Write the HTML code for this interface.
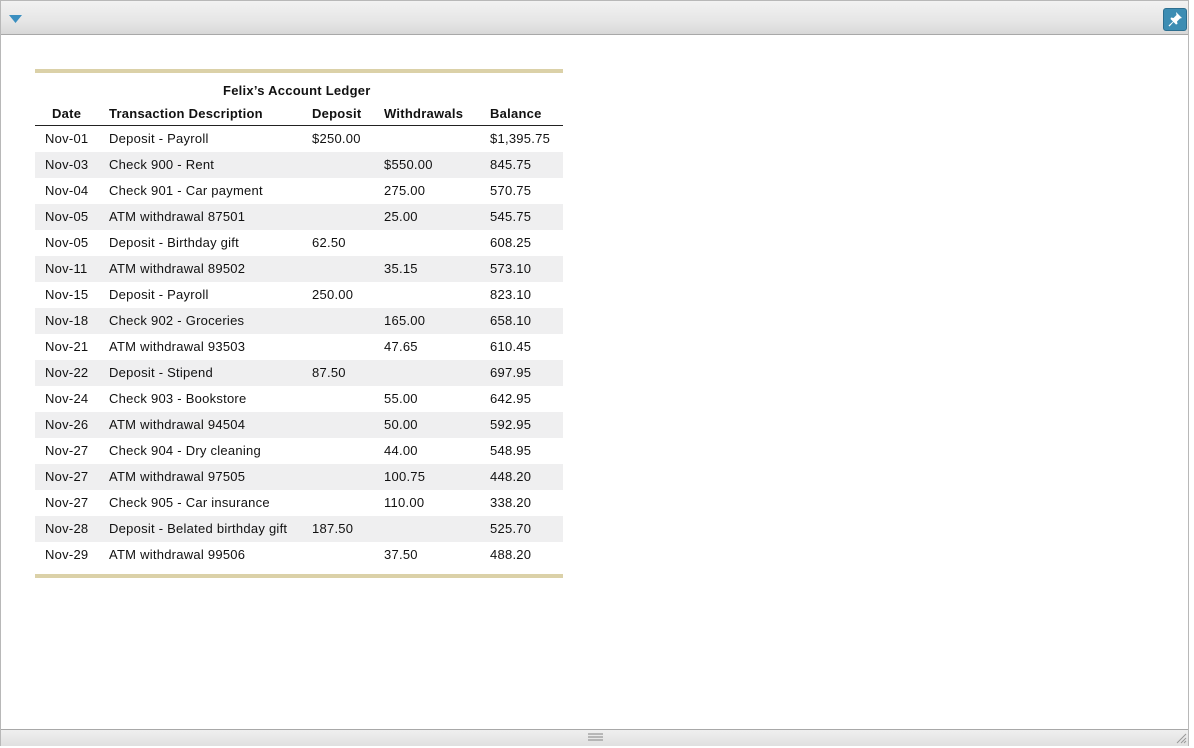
<!DOCTYPE html>
<html><head><style>
body{margin:0;width:1194px;height:748px;position:relative;overflow:hidden;background:#fff;font-family:"Liberation Sans",Arial,sans-serif;color:#111}
.frame{position:absolute;left:0;top:0;width:1189px;height:746px;border:1px solid #b8b8b8;box-sizing:border-box}
.top{position:absolute;left:1px;top:1px;width:1187px;height:33px;background:linear-gradient(#f2f2f2,#e6e6e6 60%,#d8d8d8);border-bottom:1px solid #a8a8a8}
.bot{position:absolute;left:1px;top:729px;width:1187px;height:16px;background:linear-gradient(#efefef,#e0e0e0);border-top:1px solid #a8a8a8}
.pin{position:absolute;left:1163px;top:8px;width:24px;height:23px;background:#3d8db3;border-radius:3px;border:1px solid #2d6f90;box-sizing:border-box}
.gold{position:absolute;left:35px;width:528px;height:4px;background:#dbd1a8}
.row{position:absolute;left:35px;width:528px;height:26px;font-size:13px;letter-spacing:.25px;line-height:26px}
.row span{position:absolute;white-space:nowrap}
.s{background:#efeff0}
.h{font-weight:bold}
</style></head><body>
<div class="frame"></div>
<div class="top"><svg style="position:absolute;left:8px;top:14px" width="14" height="10"><path d="M0 0H13L6.5 8Z" fill="#3b8fc0"/></svg></div>
<div class="pin"><svg width="22" height="21" viewBox="0 0 22 21"><path d="M12 3l6 6-2 .5-3 3 .5 2.5-1.5 .5-2.5-2.5-4 4.5-1-1 4.5-4-2.5-2.5 .5-1.5 2.5.5 3-3z" fill="#fff"/></svg></div>
<div class="bot"><svg style="position:absolute;left:587px;top:3px" width="16" height="9"><path d="M0 1H15M0 4H15M0 7H15" stroke="#999" stroke-width="1.2"/></svg><svg style="position:absolute;left:1174px;top:2px" width="12" height="12"><path d="M11 2L2 11M11 6L6 11M11 9L9 11" stroke="#999"/></svg></div>
<div class="gold" style="top:69px"></div>
<div class="row h" style="top:78px"><span style="left:188px">Felix’s Account Ledger</span></div>
<div class="row h" style="top:100px;border-bottom:1px solid #222;height:25px;line-height:27px"><span style="left:17px">Date</span><span style="left:74px">Transaction Description</span><span style="left:277px">Deposit</span><span style="left:349px">Withdrawals</span><span style="left:455px">Balance</span></div>
<div id="rows"></div>
<div class="gold" style="top:574px"></div>
<script>
const d=[["Nov-01","Deposit - Payroll","$250.00","","$1,395.75"],["Nov-03","Check 900 - Rent","","$550.00","845.75"],["Nov-04","Check 901 - Car payment","","275.00","570.75"],["Nov-05","ATM withdrawal 87501","","25.00","545.75"],["Nov-05","Deposit - Birthday gift","62.50","","608.25"],["Nov-11","ATM withdrawal 89502","","35.15","573.10"],["Nov-15","Deposit - Payroll","250.00","","823.10"],["Nov-18","Check 902 - Groceries","","165.00","658.10"],["Nov-21","ATM withdrawal 93503","","47.65","610.45"],["Nov-22","Deposit - Stipend","87.50","","697.95"],["Nov-24","Check 903 - Bookstore","","55.00","642.95"],["Nov-26","ATM withdrawal 94504","","50.00","592.95"],["Nov-27","Check 904 - Dry cleaning","","44.00","548.95"],["Nov-27","ATM withdrawal 97505","","100.75","448.20"],["Nov-27","Check 905 - Car insurance","","110.00","338.20"],["Nov-28","Deposit - Belated birthday gift","187.50","","525.70"],["Nov-29","ATM withdrawal 99506","","37.50","488.20"]];
const L=[10,74,277,349,455];let h="";
d.forEach((r,i)=>{h+='<div class="row'+(i%2?' s':'')+'" style="top:'+(126+i*26)+'px">'+r.map((c,j)=>'<span style="left:'+L[j]+'px">'+c+'</span>').join('')+'</div>'});
document.getElementById('rows').innerHTML=h;
</script>
</body></html>
